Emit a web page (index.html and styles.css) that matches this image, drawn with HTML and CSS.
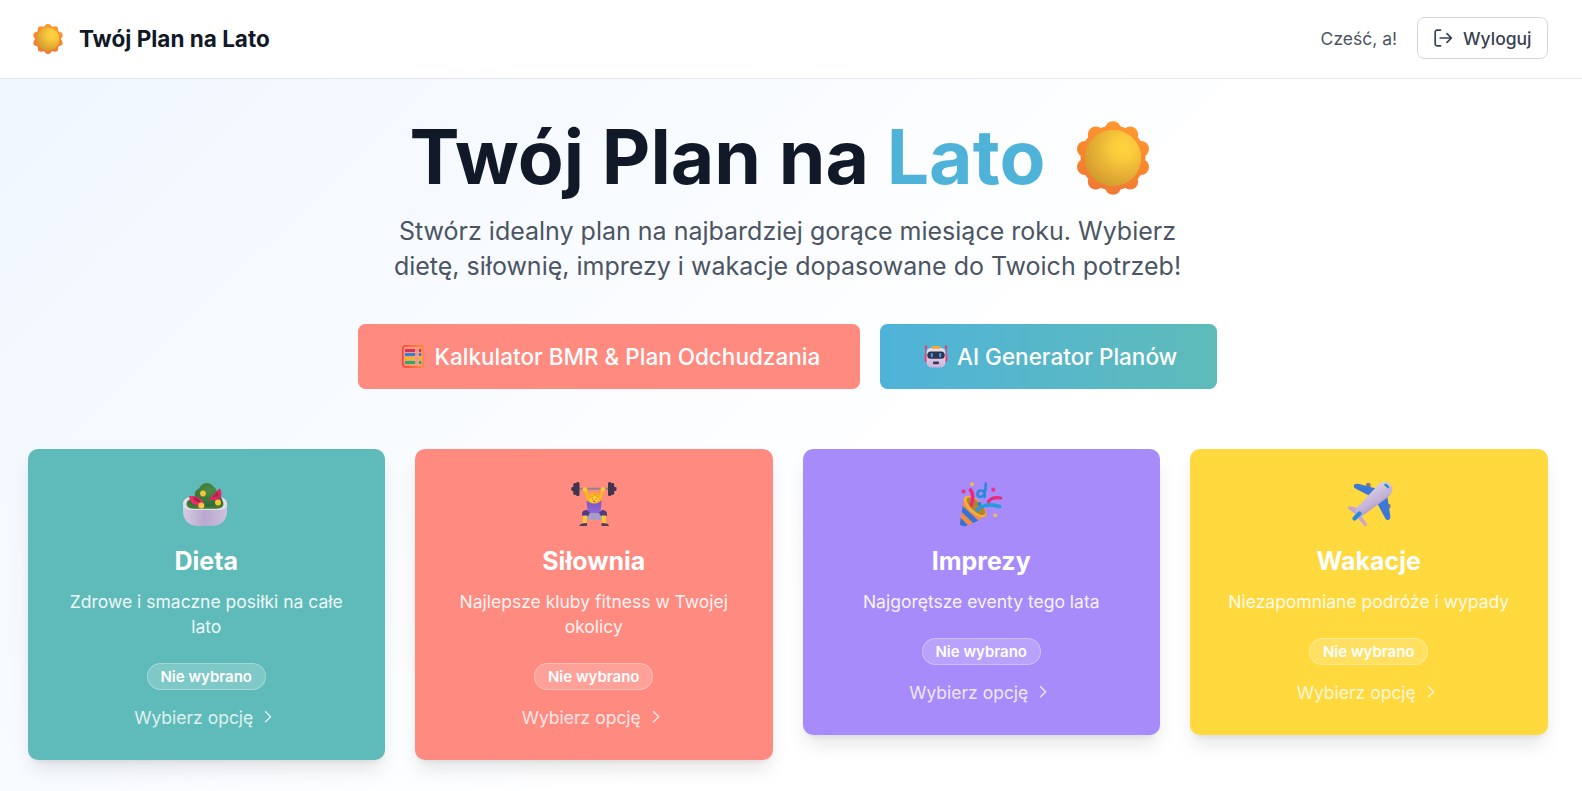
FILE: index.html
```html
<!DOCTYPE html>
<html lang="pl">
<head>
<meta charset="utf-8">
<title>Twój Plan na Lato</title>
<link rel="stylesheet" href="styles.css">
</head>
<body>
<svg class="defs" aria-hidden="true">
  <defs>
    <linearGradient id="petal" gradientUnits="userSpaceOnUse" x1="50" y1="0" x2="24" y2="74"><stop offset="0" stop-color="#ff9a30"/><stop offset=".5" stop-color="#f9862c"/><stop offset="1" stop-color="#ee7838"/></linearGradient>
    <radialGradient id="disc" cx=".68" cy=".32" r=".8"><stop offset="0" stop-color="#ffd33f"/><stop offset=".25" stop-color="#fbcb3c"/><stop offset=".6" stop-color="#e6b136"/><stop offset="1" stop-color="#cf962a"/></radialGradient>
    <linearGradient id="bowl" x1="0" x2="1"><stop offset="0" stop-color="#d4cde0"/><stop offset=".5" stop-color="#b9a7d0"/><stop offset="1" stop-color="#cdc3dc"/></linearGradient>
    <radialGradient id="leaf" cx=".6" cy=".3" r=".7"><stop offset="0" stop-color="#4d8c45"/><stop offset="1" stop-color="#2b6a38"/></radialGradient>
    <linearGradient id="shirt" x1="0" y1="0" x2="0" y2="1"><stop offset="0" stop-color="#7b55c4"/><stop offset="1" stop-color="#9067d6"/></linearGradient>
    <linearGradient id="body" x1=".3" y1=".2" x2=".7" y2=".8"><stop offset="0" stop-color="#d9cfe4"/><stop offset=".6" stop-color="#c4b2d6"/><stop offset="1" stop-color="#a48fbd"/></linearGradient>
    <linearGradient id="face" x1="0" y1="0" x2="0" y2="1"><stop offset="0" stop-color="#e8e0ee"/><stop offset="1" stop-color="#cdb3dc"/></linearGradient>
    <linearGradient id="frame"><stop offset="0" stop-color="#f5483b"/><stop offset="1" stop-color="#ff8b3d"/></linearGradient>
    <symbol id="sun" viewBox="0 0 74 74">
      <g fill="url(#petal)" stroke="url(#petal)" stroke-linejoin="round">
        <circle cx="37" cy="37" r="32.500" stroke="none"/>
        <g stroke="none"><circle cx="37" cy="8.200" r="8"/><circle cx="54.200" cy="13.500" r="8"/><circle cx="65" cy="28" r="8"/><circle cx="65" cy="46" r="8"/><circle cx="54.200" cy="60.500" r="8"/><circle cx="37" cy="65.800" r="8"/><circle cx="19.800" cy="60.500" r="8"/><circle cx="9" cy="46" r="8"/><circle cx="9" cy="28" r="8"/><circle cx="19.800" cy="13.500" r="8"/></g>
      </g>
      <circle cx="37" cy="37" r="28.200" fill="url(#disc)"/>
    </symbol>
    <symbol id="chevron" viewBox="0 0 24 24"><path d="m9 5 7 7-7 7" fill="none" stroke="currentColor" stroke-width="2" stroke-linecap="round" stroke-linejoin="round"/></symbol>
  </defs>
</svg>

<header class="topbar">
  <div class="brand"><svg class="brand-icon"><use href="#sun"/></svg><span>Twój Plan na Lato</span></div>
  <div class="account">
    <span class="greeting">Cześć, a!</span>
    <button class="logout">
      <svg viewBox="0 0 20 20"><path d="M7.500 2.200H4a1.800 1.800 0 0 0-1.800 1.800v12A1.800 1.800 0 0 0 4 17.800h3.500M7.200 10h11M14 5.600l4.400 4.400-4.400 4.400" fill="none" stroke="currentColor" stroke-width="1.700" stroke-linecap="round" stroke-linejoin="round"/></svg>
      <span>Wyloguj</span>
    </button>
  </div>
</header>

<main class="page">
  <section class="hero">
    <h1><span>Twój Plan na <em>Lato</em></span><svg class="hero-sun"><use href="#sun"/></svg></h1>
    <p>Stwórz idealny plan na najbardziej gorące miesiące roku. Wybierz<br>dietę, siłownię, imprezy i wakacje dopasowane do Twoich potrzeb!</p>
    <div class="actions">
      <button class="action action-bmr">
        <svg viewBox="0 0 22 23"><rect x=".8" y=".8" width="20.400" height="21.200" rx="3.200" fill="#ff9a77" stroke="url(#frame)" stroke-width="1.800"/>
          <g stroke="#b69ab0" stroke-width="1"><path d="M2.500 5.500h17M2.500 9.500h17M2.500 13.500h17M2.500 17.500h17"/></g>
          <g stroke-width="2.800"><path d="M3 5.500h10M17 5.500h2.300" stroke="#d92e62"/><path d="M3 9.500h10M17 9.500h2.300" stroke="#2d7fd8"/><path d="M3 13.500h10M17 13.500h2.300" stroke="#f3b52c"/><path d="M3 17.500h10M17 17.500h2.300" stroke="#25ad6c"/></g></svg>
        <span>Kalkulator BMR &amp; Plan Odchudzania</span>
      </button>
      <button class="action action-ai">
        <svg viewBox="0 0 24 23"><path d="M1.900 2v9M22.100 2v9" stroke="#d33c6c" stroke-width="1.100"/><circle cx="1.900" cy="1.800" r="1.400" fill="#ed3d68"/><circle cx="22.100" cy="1.800" r="1.400" fill="#ed3d68"/>
          <rect x=".7" y="9" width="3" height="8" rx="1.500" fill="#f03c78"/><rect x="20.300" y="9" width="3" height="8" rx="1.500" fill="#f03c78"/>
          <rect x="2.600" y="3" width="18.800" height="19.400" rx="4.500" fill="url(#face)"/><rect x="7.500" y="1" width="9" height="2.800" rx="1.400" fill="#f4a928"/>
          <rect x="3.300" y="6.600" width="17.400" height="7.200" rx="3.600" fill="#34304d"/><rect x="6.700" y="7.900" width="2.200" height="4.500" rx="1.100" fill="#20a9ee"/><rect x="15.100" y="7.900" width="2.200" height="4.500" rx="1.100" fill="#20a9ee"/><rect x="9" y="16.600" width="6" height="2.600" rx=".9" fill="#403852"/></svg>
        <span>AI Generator Planów</span>
      </button>
    </div>
  </section>

  <section class="cards">
    <article class="card card-diet">
      <svg class="card-icon" viewBox="0 0 75 65">
        <path d="M14 34q0-6 8-7h28q8 1 8 7v7c0 10-7 15-15 15H29c-8 0-15-5-15-15z" fill="url(#bowl)"/>
        <path d="M14 34q0-6 8-7h28q8 1 8 7 0 6-9 6H23q-9 0-9-6z" fill="#e3deea"/><path d="M17.500 34q0-4.500 6-5h25q6 .5 6 5 0 4.800-8 4.800h-21q-8 0-8-4.800z" fill="#3f7c31"/>
        <path d="M20 33c2-3 5-4 6-8 0-6 3-5 5-8 3-5 10-5 13-1 3 2 4 5 5 9 4 2 5 5 4 8-7 5-26 5-33 0z" fill="url(#leaf)"/>
        <path d="M20.300 26c0 7 5 10.500 14 9.500l.5-3c-3-5-8-7-14.500-6.500z" fill="#e82d65"/><path d="M24 27.500c1 3 4 5 8 5-2-4-4-5-8-5z" fill="#a92043"/>
        <path d="m39.500 29.500 11-11c2 1 2.500 7 .5 10.500q-5 2-11.500.500z" fill="#e02561"/><path d="m43 27.500 6-6v5z" fill="#ae2148"/>
        <circle cx="34" cy="23.500" r="2.900" fill="#f6c632"/><circle cx="49" cy="32.500" r="3" fill="#f6c632"/><circle cx="32.300" cy="35.500" r="3" fill="#ffc33c"/>
      </svg>
      <h2>Dieta</h2>
      <p>Zdrowe i smaczne posiłki na całe lato</p>
      <span class="badge">Nie wybrano</span>
      <a class="choose">Wybierz opcję <svg><use href="#chevron"/></svg></a>
    </article>
    <article class="card card-gym">
      <svg class="card-icon" viewBox="0 0 75 65">
        <path d="M29.500 31q2-2 4-2h8q2 0 3 2l-1 13H31z" fill="url(#shirt)"/>
        <path d="m28 19.500 4 10.500M46 19.500 42 30" stroke="#f8b823" stroke-width="3.600" stroke-linecap="round"/>
        <path d="M16 18.800h42" stroke="#94868c" stroke-width="1.900"/>
        <g fill="#ffc735"><rect x="25.700" y="17.200" width="4.600" height="3.800" rx="1.700"/><rect x="43.700" y="17.200" width="4.600" height="3.800" rx="1.700"/></g>
        <g fill="#41344c"><rect x="14.300" y="17" width="3" height="4" rx="1"/><rect x="16.300" y="13" width="3.200" height="12" rx="1.400"/><rect x="19" y="12" width="3.500" height="14" rx="1.500"/><rect x="51" y="12" width="3.500" height="14" rx="1.500"/><rect x="54" y="13" width="3.200" height="12" rx="1.400"/><rect x="56.500" y="17" width="3" height="4" rx="1"/></g>
        <path d="M31.700 32v-5q1-4.700 5.300-4.700T42.300 27v5q-5 3-10.600 0z" fill="#ffb01c"/><circle cx="37" cy="28.800" r="4.300" fill="#ffcf3e"/><path d="M32.700 27.500q4-.5 5.200-3.500 1 2.500 3.600 3.300" fill="none" stroke="#f5a318" stroke-width="1.300"/><circle cx="35.300" cy="29" r=".6" fill="#764334"/><circle cx="39" cy="29" r=".6" fill="#764334"/><ellipse cx="37.200" cy="31.300" rx="1.200" ry=".8" fill="#c53b35"/>
        <rect x="29.500" y="43" width="16" height="7" rx="3" fill="#a99cc6"/><path d="M25 44q0-4 5-4l3 3-2 3h-6zM50 44q0-4-5-4l-3 3 2 3h6z" fill="#503c83"/>
        <path d="M27.800 45.500v8M46.900 45.500v8" stroke="#ffc735" stroke-width="4.300"/><path d="M22.500 56q0-3 7.500-3v3zM52 56q0-3-7.500-3v3z" fill="#523c64"/>
      </svg>
      <h2>Siłownia</h2>
      <p>Najlepsze kluby fitness w Twojej okolicy</p>
      <span class="badge">Nie wybrano</span>
      <a class="choose">Wybierz opcję <svg><use href="#chevron"/></svg></a>
    </article>
    <article class="card card-party">
      <svg class="card-icon" viewBox="0 0 75 65">
        <path d="M20 28 16 53q1 4 6 3l20-10q2-2-1-5z" fill="#f18b48"/>
        <path d="m18.700 36 15.500 14.500-5 2.500L17.700 42zM16.800 48l7 7-3 1.300q-5 0-5-3z" fill="#3571d9"/>
        <ellipse cx="31" cy="36.500" rx="14" ry="6.500" transform="rotate(43 31 36.500)" fill="#efb53b"/><ellipse cx="31.800" cy="36.300" rx="11.800" ry="4.900" transform="rotate(43 32 36.500)" fill="#b9812a"/>
        <path d="M26.500 20c3 3 2.500 9 1 15" fill="none" stroke="#ed2975" stroke-width="3.600" stroke-linecap="round"/>
        <path d="M33 40q9-8 22.500-3.500" fill="none" stroke="#239bdd" stroke-width="3.600" stroke-linecap="round"/>
        <path d="M44.500 31.500c3-3.500 7-4.500 12-3.500" fill="none" stroke="#ed2975" stroke-width="3.300" stroke-linecap="round"/>
        <path d="M41.800 13.500c0 8-2 13.500-5.800 13.500-4-1-3-6.500 1-6.500 4.500 0 4 4 3.500 6.500" fill="none" stroke="#268bd8" stroke-width="2.500" stroke-linecap="round"/>
        <g fill="#e83586"><circle cx="19.500" cy="21.500" r="2.100"/><circle cx="49.300" cy="19.700" r="2.100"/></g><g fill="#f0b75b"><circle cx="28" cy="14.200" r="2"/><circle cx="51.300" cy="45.200" r="2"/></g><circle cx="35.500" cy="34" r="2" fill="#1c8bd2"/>
      </svg>
      <h2>Imprezy</h2>
      <p>Najgorętsze eventy tego lata</p>
      <span class="badge">Nie wybrano</span>
      <a class="choose">Wybierz opcję <svg><use href="#chevron"/></svg></a>
    </article>
    <article class="card card-trips">
      <svg class="card-icon" viewBox="0 0 75 65">
        <g fill="#8a7681"><rect x="34" y="13" width="4.500" height="5" rx="1.500"/><rect x="54" y="34" width="4.500" height="4.500" rx="1.500"/></g>
        <path d="m46 19-20-5.300q-4-.2-4.300 2.300 0 2.300 3 3.300L38 26zM55 24l3.300 22q.5 4-2.500 4-2 0-3-2.500L45 33z" fill="#3c78d7"/>
        <path d="m27 38-9-1.500q-3.500 0-2 2l9 7zM29 45l6 9.500q0 3-3 1l-6.500-8z" fill="#c8a4d2"/>
        <path d="M47 14q6-4.500 11.300.3Q63 19 57.500 26L33 44q-5 4-8 1-3-4 .5-8z" fill="url(#body)"/>
        <path d="m22.500 48.500 5-5" stroke="#2588dd" stroke-width="4.200" stroke-linecap="round"/><path d="M52.500 14.800q2.500.2 4 3.200" fill="none" stroke="#168bd8" stroke-width="2"/>
      </svg>
      <h2>Wakacje</h2>
      <p>Niezapomniane podróże i wypady</p>
      <span class="badge">Nie wybrano</span>
      <a class="choose">Wybierz opcję <svg><use href="#chevron"/></svg></a>
    </article>
  </section>
</main>
</body>
</html>
```
FILE: styles.css
```css
* { box-sizing: border-box; }
html { font-size: 20px; }
body { margin: 0; height: 791px; overflow: hidden; font-family: Inter, "Liberation Sans", sans-serif; color: #111827; background: linear-gradient(135deg, #eff6ff 0%, #ffffff 60%, #ffffff 100%); }
svg { display: block; flex: none; }
button { font: inherit; border: 0; }
.defs { position: absolute; width: 0; height: 0; }

.topbar { height: 79px; padding: 0 34px 2px 32.5px; display: flex; justify-content: space-between; align-items: center; background: #fff; border-bottom: 1px solid #e5e7eb; }
.brand { display: flex; align-items: center; gap: 16.5px; padding-top: 1px; font-size: 22.5px; line-height: 30px; font-weight: 700; }
.brand-icon { width: 30px; height: 30px; }
.account { display: flex; align-items: center; gap: 20px; font-size: 17.5px; line-height: 25px; }
.greeting { color: #4b5563; }
.logout { display: flex; align-items: center; gap: 10px; height: 42px; padding: 0 15.5px 0 15px; border: 1px solid #d1d5db; border-radius: 7.5px; background: #fff; color: #374151; font-weight: 500; }
.logout svg { width: 20px; height: 20px; }

.page { width: 1520px; margin-left: 27.5px; padding-top: 41px; }
.hero { display: flex; flex-direction: column; align-items: center; text-align: center; }
h1 { margin: 0; height: 75px; display: flex; align-items: center; gap: 31px; padding-right: 15px; font-size: 75px; line-height: 75px; font-weight: 700; white-space: nowrap; }
h1 span { margin-top: -2px; }
h1 em { font-style: normal; color: #4fb3d9; }
.hero-sun { width: 74px; height: 74px; }
.hero p { margin: 19px 0 0; font-size: 25px; line-height: 35px; color: #4b5563; white-space: nowrap; }
.actions { display: flex; gap: 20px; margin-top: 40px; }
.action { display: flex; align-items: center; height: 65px; border-radius: 7.5px; color: #fff; font-size: 22.5px; line-height: 35px; font-weight: 500; white-space: nowrap; }
.action-bmr { gap: 11px; width: 502px; padding: 0 0 0 43.5px; background: #ff8a80; }
.action-bmr svg { width: 22px; height: 23px; }
.action-ai { gap: 9px; width: 337px; padding: 0 0 0 44px; background: linear-gradient(90deg, #4fb3d9, #5ebbb9); }
.action-ai svg { width: 24px; height: 23px; }

.cards { display: grid; grid-template-columns: repeat(4, 1fr); gap: 30px; align-items: start; margin-top: 60px; }
.card { display: flex; flex-direction: column; align-items: center; padding: 21px 30px 30px; border-radius: 10px; color: #fff; text-align: center; box-shadow: 0 12.5px 18.75px -3.75px rgba(0, 0, 0, .1), 0 5px 7.5px -5px rgba(0, 0, 0, .1); }
.card-diet { background: #5ebbb9; }
.card-gym { background: #ff8a80; }
.card-party { background: #a78bfa; }
.card-trips { background: #ffd93d; }
.card-icon { width: 75px; height: 65px; margin-left: 1px; }
.card h2 { margin: 9px 0 0; font-size: 25px; line-height: 35px; font-weight: 700; }
.card p { margin: 10px 0 0; font-size: 17.5px; line-height: 25px; opacity: .9; }
.badge { margin-top: 24px; height: 27px; padding: 0 12.5px; border: 1px solid rgba(255, 255, 255, .3); border-radius: 14px; background: rgba(255, 255, 255, .2); font-size: 15px; line-height: 25px; font-weight: 600; }
.choose { display: flex; align-items: center; gap: 6px; margin-top: 15px; font-size: 17.5px; line-height: 25px; opacity: .8; }
.choose svg { width: 17.5px; height: 17.5px; margin: -1px 1.5px 0 0; }
```
